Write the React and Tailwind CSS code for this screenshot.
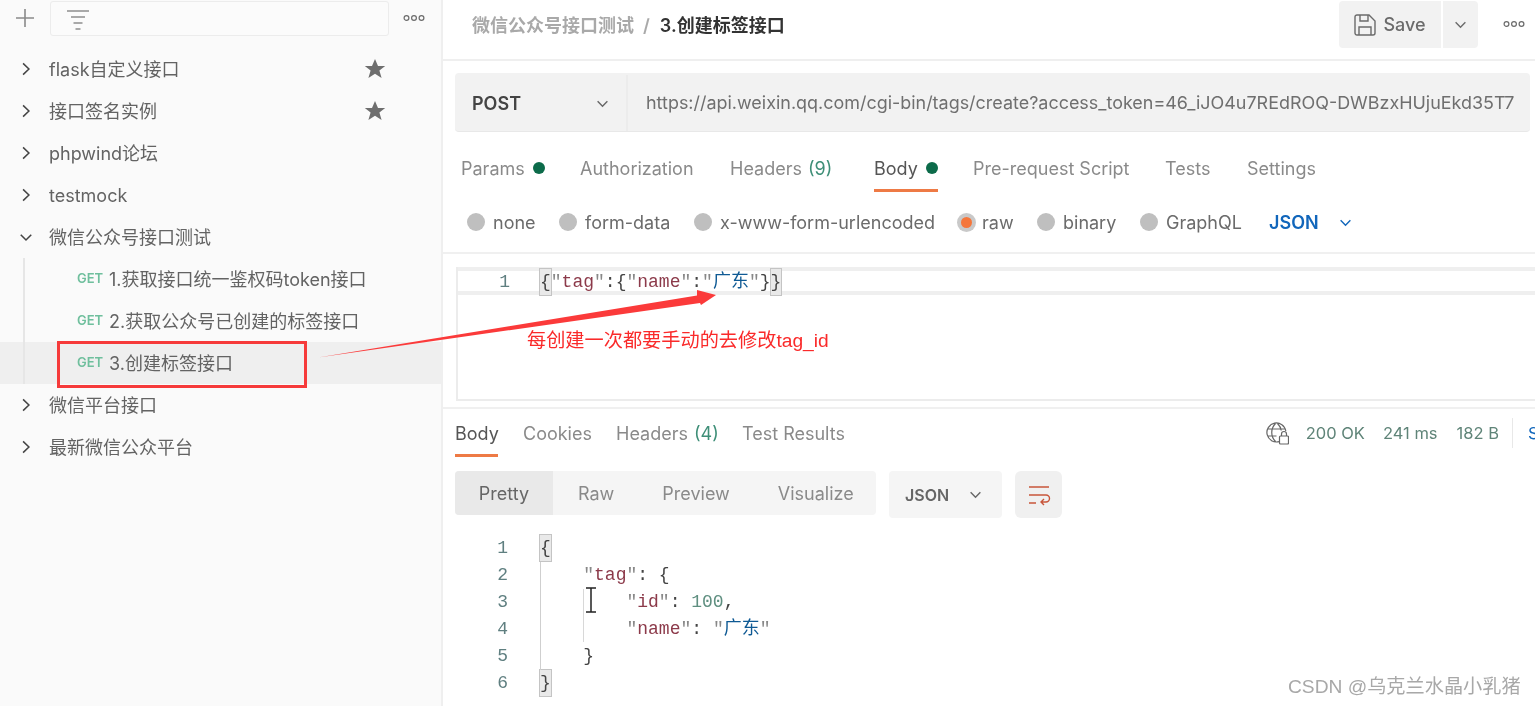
import React from "react";

const CJK = "font-['Inter','Noto_Sans_CJK_SC',sans-serif]";

const Chevron = ({ down, className = "" }) => (
  <svg viewBox="0 0 12 12" className={className} fill="none" stroke="currentColor" strokeWidth="1.3">
    {down ? <path d="M1.5 4l4.5 4.5L10.5 4" /> : <path d="M3.5 1.2L8.5 6l-5 4.8" />}
  </svg>
);

const Dots = () => (
  <svg viewBox="0 0 22 8" className="h-2 w-[22px] text-[#6b6b6b]" fill="none" stroke="currentColor" strokeWidth="1.2">
    <circle cx="3.5" cy="4" r="2.4" />
    <circle cx="11" cy="4" r="2.4" />
    <circle cx="18.5" cy="4" r="2.4" />
  </svg>
);

const Star = () => (
  <svg viewBox="0 0 22 22" className="h-[22px] w-[22px] text-[#6e6e6e]" fill="currentColor">
    <path d="M11 1l3 7h7.200l-5.800 4.600 2.200 7.400L11 15.800 4.400 20l2.200-7.400L.8 8H8z" />
  </svg>
);

const Folder = ({ name, star, down }) => (
  <div className="flex h-[42px] items-center pl-[20px] pr-[55px]">
    <Chevron down={down} className="h-[14px] w-[14px] shrink-0 -ml-[1px] text-[#444]" />
    <span className="ml-[16px] flex-1 text-[18px] text-[#636363]">{name}</span>
    {star && <Star />}
  </div>
);

const Req = ({ name, active }) => (
  <div className={`flex h-[42px] items-center pl-[77px] ${active ? "bg-[#efefef]" : ""}`}>
    <span className="w-[32px] text-[13px] font-semibold text-[#6fbf9d]">GET</span>
    <span className="text-[18px] text-[#636363]">{name}</span>
  </div>
);

const Tab = ({ children, active, className = "" }) => (
  <div className={`relative flex h-full items-center text-[18px] ${active ? "text-[#555]" : "text-[#8a8a8a]"} ${className}`}>
    {children}
    {active && <span className="absolute bottom-0 left-0 right-0 h-[3px] bg-[#ee7a45]" />}
  </div>
);

const Radio = ({ label, on, className = "" }) => (
  <div className={`flex items-center ${className}`}>
    {on ? (
      <span className="flex h-[19px] w-[19px] items-center justify-center rounded-full bg-[#c9c9c9]">
        <span className="h-[11px] w-[11px] rounded-full bg-[#f5763b]" />
      </span>
    ) : (
      <span className="h-[18px] w-[18px] rounded-full bg-[#bfbfbf]" />
    )}
    <span className={`${on ? "ml-[6px]" : "ml-[8px]"} text-[18px] text-[#6b6b6b]`}>{label}</span>
  </div>
);

const Q = ({ c = "text-[#888]", children = '"' }) => <span className={c}>{children}</span>;
const K = ({ children }) => <span className="text-[#8c3a4a]">{children}</span>;
const V = ({ children }) => <span className="text-[#0f5a94]">{children}</span>;
const Brace = ({ children }) => (
  <span className="inline-block h-[26px] w-[10.8px] bg-[#e9e9e9] text-center leading-[26px] outline outline-1 outline-[#c4c4c4]">{children}</span>
);

const CodeLine = ({ n, children }) => (
  <div className="flex h-[27px] items-center">
    <span className="w-[53px] text-right text-[#5f7f80]">{n}</span>
    <span className="ml-[32px] whitespace-pre">{children}</span>
  </div>
);

const MONO = "font-['Liberation_Mono','Noto_Sans_CJK_SC',monospace] text-[18px] leading-[27px] text-[#444]";

export default function App() {
  return (
    <div className={`relative flex h-[706px] w-[1535px] overflow-hidden bg-white blur-[0.45px] ${CJK}`}>
      {/* sidebar */}
      <aside className="flex w-[443px] shrink-0 flex-col border-r-2 border-[#efefef] bg-[#fafafa]">
        <div className="flex h-[48px] items-start pl-[16px] pr-[16px] pt-[1px]">
          <svg viewBox="0 0 18 18" className="mt-[8px] h-[18px] w-[18px] text-[#8a8a8a]" fill="none" stroke="currentColor" strokeWidth="1.6">
            <path d="M9 0v18M0 9h18" />
          </svg>
          <div className="ml-[16px] flex h-[35px] flex-1 items-start rounded-[3px] border border-[#ececec] bg-[#fbfbfb] pl-[16px] pt-[8px]">
            <svg viewBox="0 0 22 20" className="h-[20px] w-[22px] text-[#8f8f8f]" fill="none" stroke="currentColor" strokeWidth="1.6">
              <path d="M0 1h22M4 7h14M6.500 13h9M8.500 19h5" />
            </svg>
          </div>
          <div className="ml-[14px] mt-[13px]"><Dots /></div>
        </div>
        <Folder name="flask自定义接口" star />
        <Folder name="接口签名实例" star />
        <Folder name="phpwind论坛" />
        <Folder name="testmock" />
        <Folder name="微信公众号接口测试" down />
        <div className="relative">
          <span className="absolute bottom-0 left-[23px] top-0 w-[2px] bg-[#e6e6e6]" />
          <Req name="1.获取接口统一鉴权码token接口" />
          <Req name="2.获取公众号已创建的标签接口" />
          <Req name="3.创建标签接口" active />
        </div>
        <Folder name="微信平台接口" />
        <Folder name="最新微信公众平台" />
      </aside>

      {/* main */}
      <main className="flex min-w-0 flex-1 flex-col">
        <header className="flex h-[61px] shrink-0 items-start border-b-2 border-[#efefef] pl-[29px] pr-[10px]">
          <div className="mt-[12px] flex flex-1 items-center text-[18px] font-semibold">
            <span className="text-[#a9a9a9]">微信公众号接口测试</span>
            <span className="ml-[9px] mr-[10px] text-[#a9a9a9]">/</span>
            <span className="text-[#333]">3.创建标签接口</span>
          </div>
          <div className="mt-[1px] flex h-[47px] w-[102px] items-center justify-center gap-[7px] rounded-l-[4px] bg-[#f2f2f2] text-[18px] font-medium text-[#6b6b6b]">
            <svg viewBox="0 0 22 22" className="h-[22px] w-[22px]" fill="none" stroke="currentColor" strokeWidth="1.4">
              <path d="M3 1h12l6 6v12a2 2 0 0 1-2 2H3a2 2 0 0 1-2-2V3a2 2 0 0 1 2-2z" />
              <path d="M6 1v6h8V1M5 21v-8h12v8" />
            </svg>
            Save
          </div>
          <div className="ml-[2px] mt-[1px] flex h-[47px] w-[35px] items-center justify-center rounded-r-[4px] bg-[#f2f2f2] text-[#6b6b6b]">
            <Chevron down className="h-[13px] w-[13px]" />
          </div>
          <div className="ml-[25px] mt-[20px]"><Dots /></div>
        </header>

        <div className="ml-[12px] mr-[5px] mt-[12px] flex h-[59px] shrink-0 items-center rounded-[4px] border-b border-[#e8e8e8] bg-[#f2f2f2] pt-[2px]">
          <div className="flex h-full w-[173px] items-center justify-between border-r-2 border-[#ececec] pl-[17px] pr-[17px]">
            <span className="text-[18px] font-semibold text-[#444]">POST</span>
            <Chevron down className="h-[13px] w-[13px] text-[#666]" />
          </div>
          <span className="ml-[18px] whitespace-nowrap text-[17.960px] text-[#6f6f6f]">
            https://api.weixin.qq.com/cgi-bin/tags/create?access_token=46_iJO4u7REdROQ-DWBzxHUjuEkd35T7
          </span>
        </div>

        <nav className="flex h-[60px] shrink-0 items-center pl-[18px] pt-[12px]">
          <Tab className="w-[119px]">Params<span className="ml-[8px] h-[12px] w-[12px] rounded-full bg-[#0c6b4a]" /></Tab>
          <Tab className="w-[150px]">Authorization</Tab>
          <Tab className="w-[144px]">Headers<span className="ml-[6px] text-[#3f8f78]">(9)</span></Tab>
          <div className="h-full w-[99px]">
            <Tab active className="w-[64px] justify-between">Body<span className="h-[12px] w-[12px] rounded-full bg-[#0c6b4a]" /></Tab>
          </div>
          <Tab className="w-[192px]">Pre-request Script</Tab>
          <Tab className="w-[82px]">Tests</Tab>
          <Tab>Settings</Tab>
        </nav>

        <div className="flex h-[62px] shrink-0 items-center border-b-2 border-[#f0f0f0] pl-[24px]">
          <Radio label="none" className="w-[92px]" />
          <Radio label="form-data" className="w-[135px]" />
          <Radio label="x-www-form-urlencoded" className="w-[263px]" />
          <Radio label="raw" on className="w-[80px]" />
          <Radio label="binary" className="w-[103px]" />
          <Radio label="GraphQL" className="w-[129px]" />
          <span className="text-[18px] font-semibold text-[#1166bb]">JSON</span>
          <Chevron down className="ml-[20px] h-[13px] w-[13px] text-[#1166bb]" />
        </div>

        <div className={`ml-[13px] mt-[13px] h-[134px] shrink-0 border-b-2 border-l-2 border-[#ececec] ${MONO}`}>
          <div className="flex h-[28px] items-center border-y-4 border-[#efefef] pt-[3px]">
            <span className="w-[52px] text-right text-[#5f7f80]">1</span>
            <span className="ml-[30px] whitespace-pre">
              <Brace>{"{"}</Brace><Q /><K>tag</K><Q />:{"{"}<Q /><K>name</K><Q />:<Q /><V>广东</V><Q />{"}"}<Brace>{"}"}</Brace>
            </span>
          </div>
        </div>

        <div className="mt-[6px] h-[2px] shrink-0 bg-[#f0f0f0]" />

        <div className="flex h-[48px] shrink-0 items-stretch pl-[12px] pr-0">
          <Tab active className="w-[43px]">Body</Tab>
          <Tab className="ml-[25px] w-[93px]">Cookies</Tab>
          <Tab className="w-[126px]">Headers<span className="ml-[6px] text-[#3f8f78]">(4)</span></Tab>
          <Tab>Test Results</Tab>
          <div className="ml-auto flex items-center overflow-hidden text-[16.500px] text-[#5f8478]">
            <svg viewBox="0 0 24 24" className="h-[24px] w-[24px] text-[#666]" fill="none" stroke="currentColor" strokeWidth="1.200">
              <path d="M14 20.600A9.500 9.500 0 1 1 20.800 10M2.500 8h17M2.500 15h9M10.500 2.500c-5 5-5 13 0 18M12.500 2.500c2.500 2.500 3.500 5 3.700 7" />
              <rect x="14.500" y="15" width="9" height="8" rx="1" />
              <path d="M16.500 15v-2a2.500 2.500 0 0 1 5 0v2" />
            </svg>
            <span className="ml-[17px]">200 OK</span>
            <span className="ml-[18px]">241 ms</span>
            <span className="ml-[19px]">182 B</span>
            <span className="ml-[13px] h-[30px] w-[1px] bg-[#e8e8e8]" />
            <span className="ml-[15px] w-[7px] overflow-hidden text-[#1166bb]">S</span>
          </div>
        </div>

        <div className="ml-[12px] mt-[14px] flex h-[47px] shrink-0 items-start">
          <div className="flex h-[44px] w-[421px] items-center rounded-[4px] bg-[#f5f5f5] text-[18px] text-[#8a8a8a]">
            <span className="flex h-full w-[98px] items-center justify-center rounded-l-[4px] bg-[#e9e9e9] text-[#666]">Pretty</span>
            <span className="ml-[25px]">Raw</span>
            <span className="ml-[48px]">Preview</span>
            <span className="ml-[48px]">Visualize</span>
          </div>
          <div className="ml-[13px] flex h-[47px] w-[113px] items-center rounded-[4px] bg-[#f5f5f5] pl-[16px] text-[#666]">
            <span className="text-[16px] font-semibold">JSON</span>
            <Chevron down className="ml-[20px] h-[13px] w-[13px]" />
          </div>
          <div className="ml-[13px] flex h-[47px] w-[47px] items-center justify-center rounded-[6px] bg-[#f0f0f0] text-[#c8553a]">
            <svg viewBox="0 0 24 24" className="h-[24px] w-[24px]" fill="none" stroke="currentColor" strokeWidth="1.400">
              <path d="M2 4h20M2 12h17a3 3 0 0 1 0 7h-5M17 16l-3 3 3 3M2 20h7" />
            </svg>
          </div>
        </div>

        <div className={`relative ml-[12px] mt-[17px] ${MONO}`}>
          <span className="absolute bottom-[27px] left-[85px] top-[27px] w-[1px] bg-[#cfcfcf]" />
          <span className="absolute bottom-[55px] left-[128px] top-[54px] w-[1px] bg-[#d8d8d8]" />
          <CodeLine n="1"><Brace>{"{"}</Brace></CodeLine>
          <CodeLine n="2">{"    "}<Q /><K>tag</K><Q />: {"{"}</CodeLine>
          <CodeLine n="3">{"        "}<Q /><K>id</K><Q />: <span className="text-[#5f8f80]">100</span>,</CodeLine>
          <CodeLine n="4">{"        "}<Q /><K>name</K><Q />: <Q /><V>广东</V><Q /></CodeLine>
          <CodeLine n="5">{"    "}{"}"}</CodeLine>
          <CodeLine n="6"><Brace>{"}"}</Brace></CodeLine>
          <svg viewBox="0 0 12 26" className="absolute left-[130px] top-[52px] h-[26px] w-[12px] text-[#222]" fill="none" stroke="currentColor" strokeWidth="1.500">
            <path d="M1 1h10M6 1v24M1 25h10" />
          </svg>
        </div>
      </main>

      {/* annotations */}
      <div className="absolute left-[57px] top-[341px] h-[47px] w-[250px] border-[3px] border-[#f63a3a]" />
      <svg className="absolute left-0 top-0 h-[706px] w-[1535px]" viewBox="0 0 1535 706" fill="#fb3a3a">
        <path d="M318 357.500L697 295.500L697 290L716 295L701 305L700 303Z" />
      </svg>
      <span className="absolute left-[527px] top-[329px] font-['Liberation_Sans','Noto_Sans_CJK_SC',sans-serif] text-[19.200px] leading-[24px] text-[#fa2a2a]">
        每创建一次都要手动的去修改tag_id
      </span>
      <span className="absolute left-[1288px] top-[675px] font-['Liberation_Sans','Noto_Sans_CJK_SC',sans-serif] text-[19.200px] leading-[24px] text-[#a8a8a8]">
        CSDN @乌克兰水晶小乳猪
      </span>
    </div>
  );
}
